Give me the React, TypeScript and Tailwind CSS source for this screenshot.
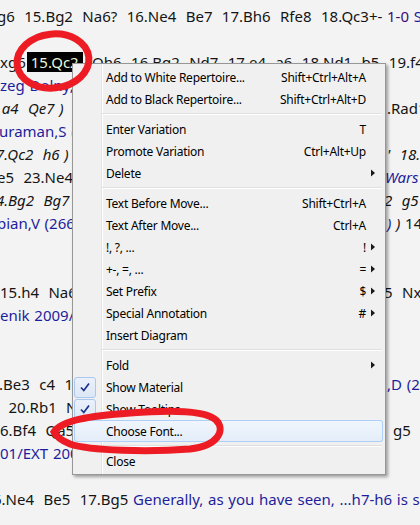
import clsx from "clsx";

const blue = "text-[#1e1e9c]";

function Line({ children, right, className }: { children?: React.ReactNode; right?: React.ReactNode; className?: string }) {
  return (
    <div className="flex h-[23px] whitespace-pre">
      <div className="w-[386px] shrink-0 overflow-hidden">
        <div className={className}>{children}</div>
      </div>
      {right && <div className="overflow-hidden pl-[1px]">{right}</div>}
    </div>
  );
}

function Arrow() {
  return (
    <svg width="17" height="22" viewBox="0 0 17 22">
      <path d="M5 7.5 L9 11 L5 14.5 Z" fill="#1a1a1a" />
    </svg>
  );
}

function Item({ label, keys, sub, checked, hot }: { label: string; keys?: string; sub?: boolean; checked?: boolean; hot?: boolean }) {
  return (
    <div className={clsx("flex h-[22px] items-center rounded-[3px]",
      hot && "bg-[linear-gradient(#f1f6fd,#e3ecf8)] shadow-[inset_0_0_0_1px_#aecff7]")}>
      <div className="flex h-full w-[27px] shrink-0 items-center">
        {checked && <div className="flex h-[21px] w-[22px] items-center justify-center rounded-[3px] border border-[#aac8ee] bg-[linear-gradient(#eaf1fb,#dde7f5)]">
          <svg width="12" height="12" viewBox="0 0 12 12">
            <path d="M2 6.5 L4.8 9.5 L10 2.5" fill="none" stroke="#1b2f8f" strokeWidth="1.7" />
          </svg>
        </div>}
      </div>
      <div className="flex-1 pl-[5px]">{label}</div>
      {keys && <div>{keys}</div>}
      <div className="w-[17px] shrink-0">{sub && <Arrow />}</div>
    </div>
  );
}

function Sep() {
  return (
    <div className="flex h-[8px] items-center pl-[28px] pr-[1px]">
      <div className="h-[2px] w-full border-t border-[#e0e0e0] border-b border-b-white" />
    </div>
  );
}

export default function App() {
  return (
    <div className="relative h-[525px] w-[420px] overflow-hidden bg-[#f3f3f3] font-['Noto_Sans',sans-serif] text-[15px] leading-[23px] text-[#151515] [word-spacing:0.8px]">
      <div className="pt-[5px]">
        <div className="h-[23px] whitespace-pre ml-[-3px]">
          g6  15.Bg2  Na6?  16.Ne4  Be7  17.Bh6  Rfe8  18.Qc3+- <span className="text-[#3c0a78]">1-0</span> <span className={blue}>Se</span>
        </div>
        <div className="h-[23px]" />
        <div className="h-[23px] whitespace-pre">
          xg6<span className="ml-[1px] bg-black px-[4px] text-[#e6f7dc]">15.Qc2</span>  Qh6  16.Bg2  Nd7  17.e4  a6  18.Nd1  b5  19.f4
        </div>
        <Line className={blue}>zeg Dolny, Krakow</Line>
        <Line className="ml-[-3px] italic" right={<span>.Rad1</span>}> a4  Qe7 )  14.Rad1</Line>
        <Line className={clsx(blue, "ml-[-1px]")}>uraman,S (2512)</Line>
        <Line className="ml-[-4px] italic" right={<span className="italic">'  18.</span>}>7.Qc2  h6 )  17.Bf4</Line>
        <Line className="ml-[-3px]" right={<span className={clsx(blue, "italic ml-[-2px]")}>Wars</span>}>e5  23.Ne4  Bf6</Line>
        <Line className="ml-[-4px] italic" right={<span className="italic ml-[-3px]">2  g5</span>}>4.Bg2  Bg7  15.Qc2</Line>
        <Line className={clsx(blue, "ml-[-3px]")} right={<span><span className={clsx(blue, "italic")}>)</span><span className="italic"> )</span> 14</span>}>pian,V (2669)</Line>
        <Line />
        <Line />
        <Line right={<span className="ml-[-3px]">5  Nx</span>}>15.h4  Na6  16.Nd2</Line>
        <Line className={blue}>enik 2009/EXT</Line>
        <Line />
        <Line />
        <Line className="ml-[-1px]" right={<span className={blue}>,D (2</span>}>.Be3  c4  17.Bc1</Line>
        <Line className="ml-[-1px]">  20.Rb1  Nd7</Line>
        <Line right={<span className="ml-[6px]">g5</span>}>6.Bf4  Qa5</Line>
        <Line className={blue}>01/EXT 2009</Line>
        <Line />
        <div className="h-[23px] whitespace-pre ml-[-7px]">
          6.Ne4  Be5  17.Bg5 <span className={blue}>Generally, as you have seen, ...h7-h6 is safe</span>
        </div>
      </div>

      <div className="absolute left-[72px] top-[63px] w-[314px] border border-[#979797] bg-[#f0f0f0] bg-[linear-gradient(to_right,#f0f0f0_28px,#e2e3e3_28px,#e2e3e3_29px,#ffffff_29px,#ffffff_30px,#f0f0f0_30px)] pb-[2px] pl-[1px] pr-[2px] pt-[2px] text-[12px] tracking-[-0.25px] text-black shadow-[2px_2px_3px_rgba(0,0,0,0.35)] [word-spacing:0px]">
        <Item label="Add to White Repertoire..." keys="Shift+Ctrl+Alt+A" />
        <Item label="Add to Black Repertoire..." keys="Shift+Ctrl+Alt+D" />
        <Sep />
        <Item label="Enter Variation" keys="T" />
        <Item label="Promote Variation" keys="Ctrl+Alt+Up" />
        <Item label="Delete" sub />
        <Sep />
        <Item label="Text Before Move..." keys="Shift+Ctrl+A" />
        <Item label="Text After Move..." keys="Ctrl+A" />
        <Item label="!, ?, ..." keys="!" sub />
        <Item label="+-, =, ..." keys="=" sub />
        <Item label="Set Prefix" keys="$" sub />
        <Item label="Special Annotation" keys="#" sub />
        <Item label="Insert Diagram" />
        <Sep />
        <Item label="Fold" sub />
        <Item label="Show Material" checked />
        <Item label="Show Tooltips" checked />
        <Item label="Choose Font..." hot />
        <Sep />
        <Item label="Close" />
      </div>

      <svg className="pointer-events-none absolute left-0 top-0" width="420" height="525" viewBox="0 0 420 525">
        <ellipse cx="53" cy="61" rx="36" ry="27" fill="none" stroke="#ed1c24" strokeWidth="7" transform="rotate(-6 53 61)" />
        <path d="M54 432 C62 420 90 416 130 413 C170 410 205 410 216 420 C226 430 218 446 190 449 C150 452 90 451 70 444 C60 440 56 436 54 432 Z"
          fill="none" stroke="#ed1c24" strokeWidth="7" />
      </svg>
    </div>
  );
}
